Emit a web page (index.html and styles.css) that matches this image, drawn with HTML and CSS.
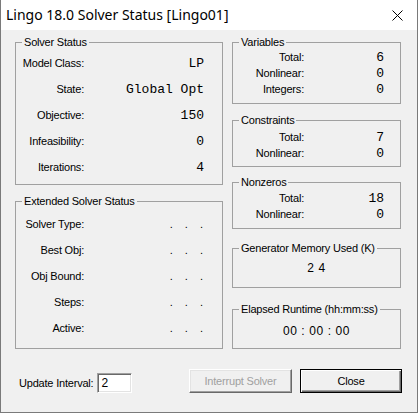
FILE: index.html
```html
<!DOCTYPE html>
<html>
<head>
<meta charset="utf-8">
<link rel="stylesheet" href="styles.css">
</head>
<body>
<div class="window">
  <div class="titlebar">
    <span class="title">Lingo 18.0 Solver Status [Lingo01]</span>
    <svg class="close-x" width="11" height="11" viewBox="0 0 11 11"><path d="M0.5 0.5 L10.5 10.5 M10.5 0.5 L0.5 10.5" stroke="#000" stroke-width="1" fill="none"/></svg>
  </div>
  <div class="client">
    <div class="columns">
      <div class="col col-left">
        <div class="group g-status">
          <div class="caption">Solver Status</div>
          <div class="rows rows-status">
            <div class="row"><span class="lbl">Model Class:</span><span class="val mono">LP</span></div>
            <div class="row"><span class="lbl">State:</span><span class="val mono">Global Opt</span></div>
            <div class="row"><span class="lbl">Objective:</span><span class="val mono">150</span></div>
            <div class="row"><span class="lbl">Infeasibility:</span><span class="val mono">0</span></div>
            <div class="row"><span class="lbl">Iterations:</span><span class="val mono">4</span></div>
          </div>
        </div>
        <div class="group g-ext">
          <div class="caption">Extended Solver Status</div>
          <div class="rows rows-ext">
            <div class="row"><span class="lbl">Solver Type:</span><span class="val dots">. . .</span></div>
            <div class="row"><span class="lbl">Best Obj:</span><span class="val dots">. . .</span></div>
            <div class="row"><span class="lbl">Obj Bound:</span><span class="val dots">. . .</span></div>
            <div class="row"><span class="lbl">Steps:</span><span class="val dots">. . .</span></div>
            <div class="row"><span class="lbl">Active:</span><span class="val dots">. . .</span></div>
          </div>
        </div>
      </div>
      <div class="col col-right">
        <div class="group g-vars">
          <div class="caption">Variables</div>
          <div class="rows rows-small rs-vars">
            <div class="row"><span class="lbl">Total:</span><span class="val mono">6</span></div>
            <div class="row"><span class="lbl">Nonlinear:</span><span class="val mono">0</span></div>
            <div class="row"><span class="lbl">Integers:</span><span class="val mono">0</span></div>
          </div>
        </div>
        <div class="group g-cons">
          <div class="caption">Constraints</div>
          <div class="rows rows-small rs-cons">
            <div class="row"><span class="lbl">Total:</span><span class="val mono">7</span></div>
            <div class="row"><span class="lbl">Nonlinear:</span><span class="val mono">0</span></div>
          </div>
        </div>
        <div class="group g-nz">
          <div class="caption">Nonzeros</div>
          <div class="rows rows-small rs-nz">
            <div class="row"><span class="lbl">Total:</span><span class="val mono">18</span></div>
            <div class="row"><span class="lbl">Nonlinear:</span><span class="val mono">0</span></div>
          </div>
        </div>
        <div class="group g-mem">
          <div class="caption">Generator Memory Used (K)</div>
          <div class="center-val cv-mem">2 4</div>
        </div>
        <div class="group g-time">
          <div class="caption">Elapsed Runtime (hh:mm:ss)</div>
          <div class="center-val cv-time">00 : 00 : 00</div>
        </div>
      </div>
    </div>
    <div class="bottom">
      <span class="upd-label">Update Interval:</span>
      <span class="input">2</span>
      <span class="spacer"></span>
      <span class="btn btn-disabled">Interrupt Solver</span>
      <span class="btn btn-default">Close</span>
    </div>
  </div>
</div>
</body>
</html>
```

FILE: styles.css
```css
* { box-sizing: border-box; }
html, body { margin: 0; padding: 0; background: #ffffff; }
body {
  font-family: "Liberation Sans", Arial, sans-serif;
  font-size: 11px;
  color: #000;
}
.window { width: 418px; height: 414px; }
.titlebar {
  height: 30px;
  background: #ffffff;
  display: flex;
  align-items: center;
  padding: 0 14px 0 5px;
  border-left: 1px solid #7a7a7a;
  border-right: 1px solid #7a7a7a;
}
.title {
  font-family: "Noto Sans", "Open Sans", sans-serif;
  font-size: 14px;
  color: #000;
  flex: 1;
  padding-bottom: 1px;
}
.close-x { display: block; }
.client {
  height: 383px;
  background: #f0f0f0;
  border: 1px solid #7a7a7a;
  border-top: none;
  padding: 12px 0 0 14px;
}
.columns {
  display: grid;
  grid-template-columns: 208px 169px;
  column-gap: 9px;
  height: 307px;
}
.col { display: flex; flex-direction: column; }
.group {
  border: 1px solid #a0a0a0;
  letter-spacing: -0.2px;
}
.caption {
  margin: -7px 0 0 6px;
  padding: 0 2px;
  line-height: 13px;
  height: 13px;
  background: #f0f0f0;
  width: max-content;
}
.g-status { height: 143px; }
.g-ext { height: 148px; margin-top: 16px; }
.g-vars { height: 62px; }
.g-cons { height: 47px; margin-top: 16px; }
.g-nz { height: 47px; margin-top: 15px; }
.g-mem { height: 40px; margin-top: 19px; }
.g-time { height: 40px; margin-top: 21px; }

.rows-status { padding: 1px 18px 0 0; }
.rows-ext { padding: 3px 19px 0 0; }
.row {
  display: grid;
  grid-template-columns: 68px 1fr;
  height: 26px;
  align-items: center;
}
.lbl { text-align: right; white-space: nowrap; }
.val { text-align: right; white-space: nowrap; }
.mono {
  font-family: "Liberation Mono", "Courier New", monospace;
  font-size: 13px;
  letter-spacing: 0;
}
.dots { word-spacing: 9px; letter-spacing: 0; }
.rows-small { padding-right: 16px; }
.rows-small .row { height: 16px; grid-template-columns: 71px 1fr; }
.rs-vars { padding-top: 0; }
.rs-cons { padding-top: 2px; }
.rs-nz { padding-top: 1px; }
.center-val {
  text-align: center;
  line-height: 16px;
  font-size: 12px;
  letter-spacing: 0.6px;
}
.cv-mem { padding-top: 5px; }
.cv-time { padding-top: 7px; }

.bottom {
  display: flex;
  align-items: flex-end;
  margin-top: 20px;
  height: 24px;
  padding: 0 15px 0 4px;
  letter-spacing: -0.2px;
}
.upd-label { line-height: 20px; }
.input {
  margin-left: 4px;
  width: 35px;
  height: 20px;
  background: #fff;
  border-top: 1px solid #a0a0a0;
  border-left: 1px solid #a0a0a0;
  border-right: 1px solid #fff;
  border-bottom: 1px solid #fff;
  box-shadow: inset 1px 1px 0 #696969, inset -1px -1px 0 #e3e3e3;
  padding: 0 0 0 3px;
  line-height: 18px;
  font-size: 12px;
}
.spacer { flex: 1; }
.btn {
  height: 24px;
  display: flex;
  align-items: center;
  justify-content: center;
  background: #f0f0f0;
}
.btn-disabled {
  width: 103px;
  color: #a0a0a0;
  border-top: 1px solid #fff;
  border-left: 1px solid #fff;
  border-right: 1px solid #696969;
  border-bottom: 1px solid #696969;
  box-shadow: inset -1px -1px 0 #a0a0a0, inset 1px 1px 0 #e3e3e3;
}
.btn-default {
  width: 102px;
  margin-left: 8px;
  border: 1px solid #000;
  box-shadow: inset 1px 1px 0 #fff, inset -1px -1px 0 #696969, inset -2px -2px 0 #a0a0a0;
}
```
